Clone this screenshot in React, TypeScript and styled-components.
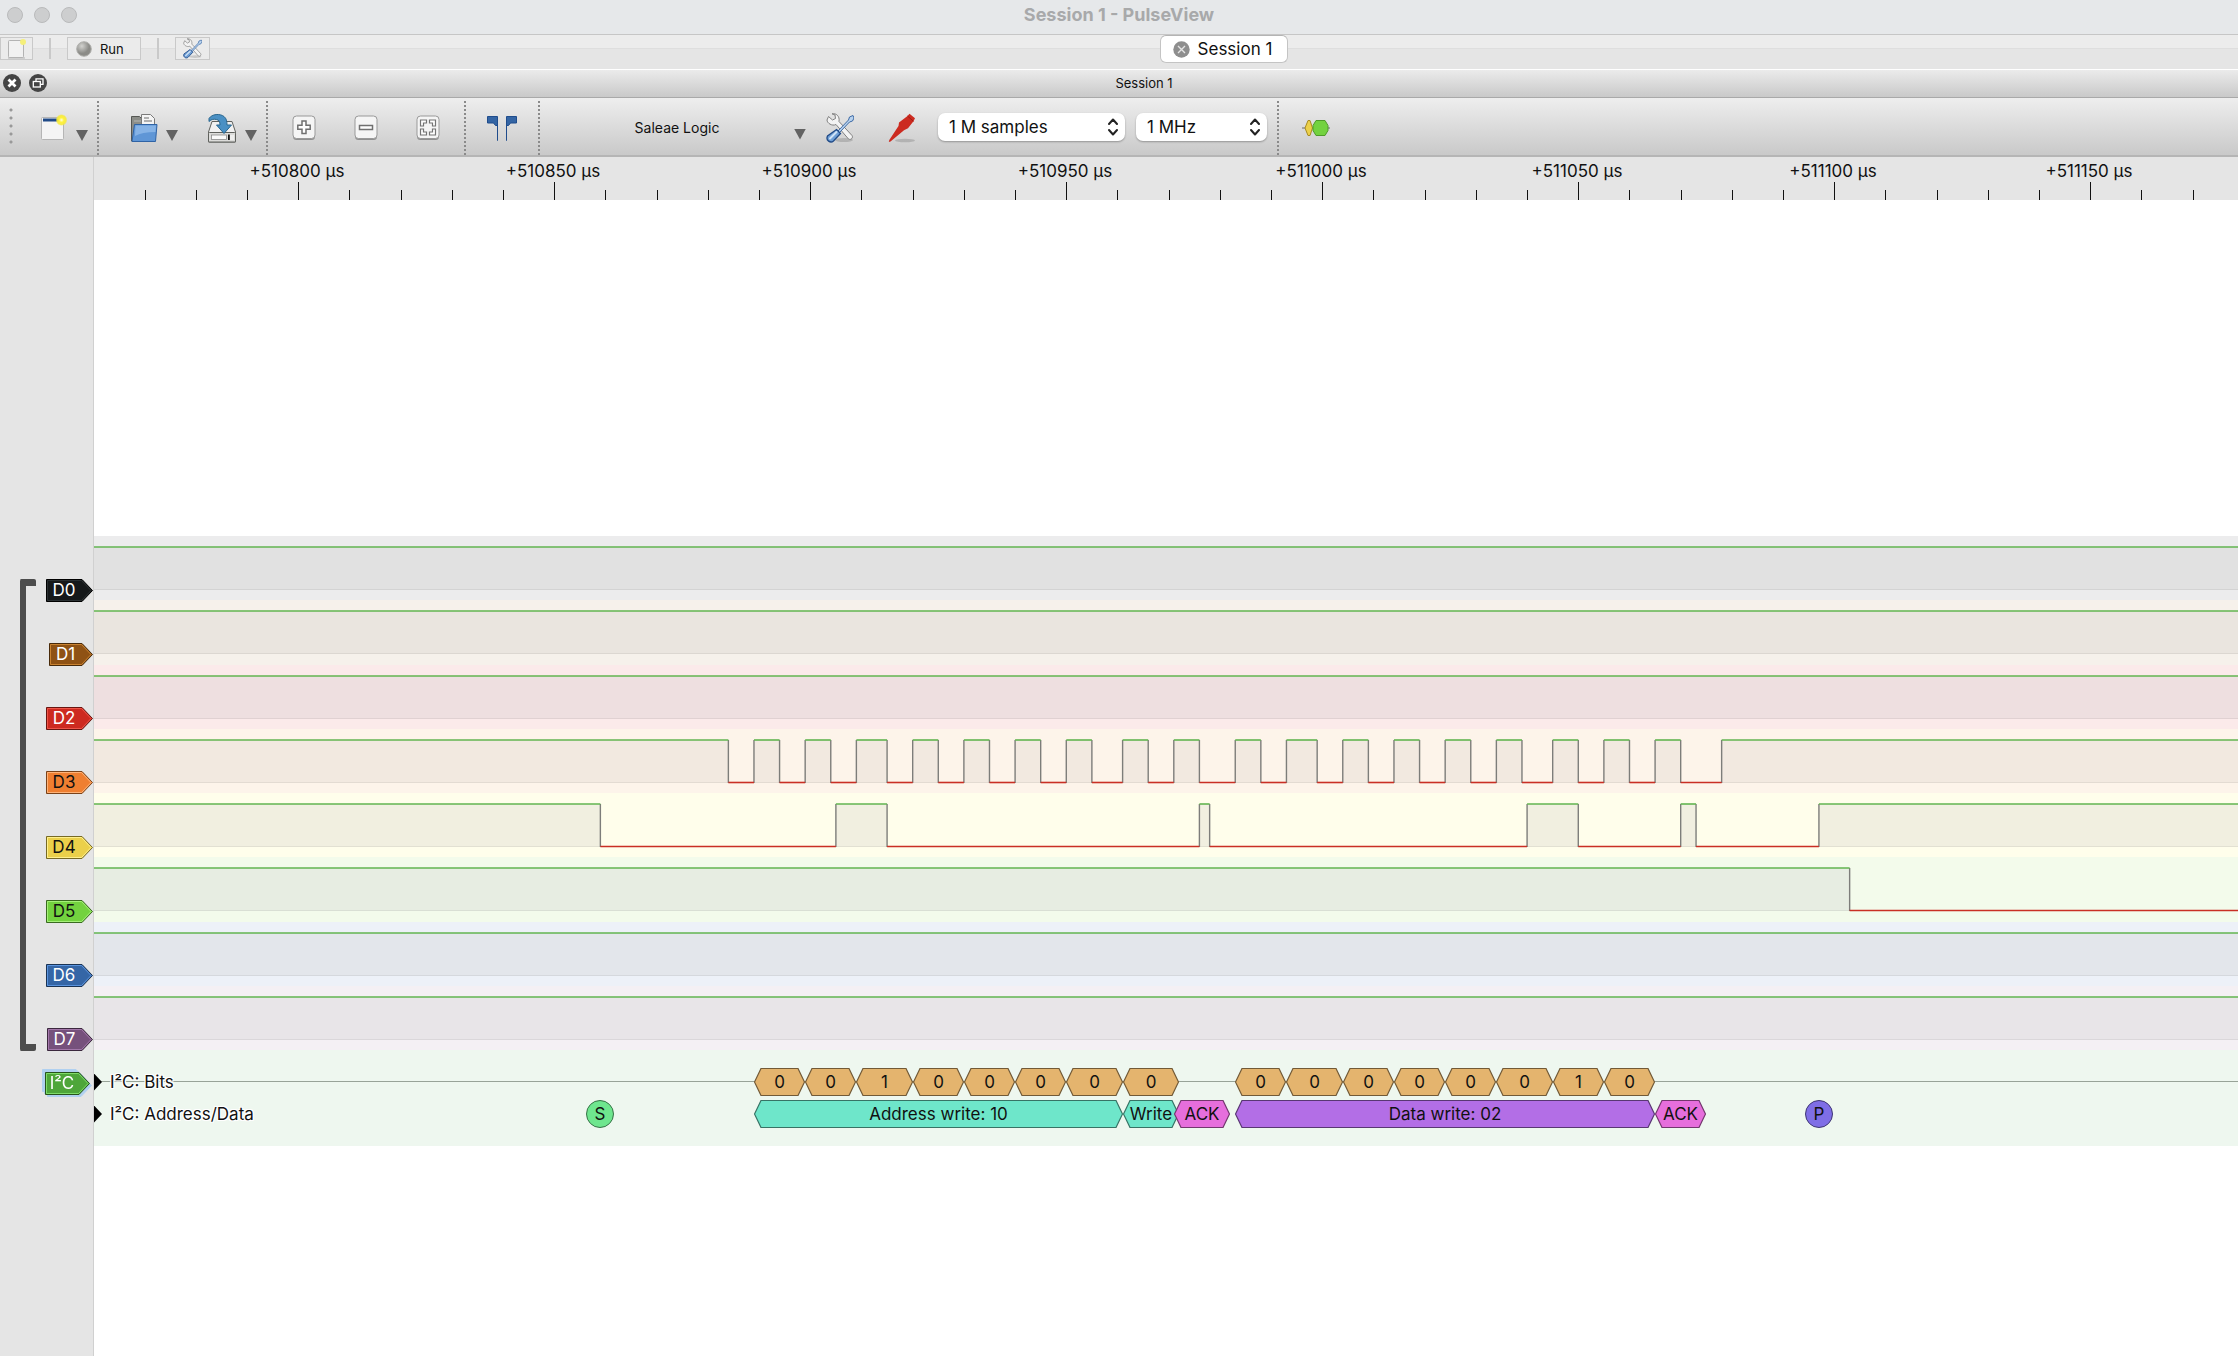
import React from "react";
import styled, { createGlobalStyle } from "styled-components";

/* ---------- time base ---------- */

const VIEW_START = 510760.1;
const PX_PER_US = 5.12;
const timeToX = (us: number) => (us - VIEW_START) * PX_PER_US;
const BASE = 510800;

/* ---------- data ---------- */

type Channel = {
  name: string;
  color: string;
  edge: string;
  glow: string;
  dark?: boolean;
  row: string;
  fill: string;
  edges: number[];
};

const CLOCK_EDGES = [
  84, 89, 94, 99, 104, 109, 115, 120, 125, 130, 135, 140, 145, 150, 155, 161, 166, 171, 176, 183, 188, 193, 199, 204,
  209, 214, 219, 224, 229, 234, 239, 245, 250, 255, 260, 265, 270, 278,
];

const CHANNELS: Channel[] = [
  { name: "D0", color: "#16191a", edge: "#000000", glow: "#2b3133", row: "#ececed", fill: "#e1e1e1", edges: [] },
  { name: "D1", color: "#8f5214", edge: "#482a0a", glow: "#c98230", row: "#f6f1eb", fill: "#eae5df", edges: [] },
  { name: "D2", color: "#cd2a20", edge: "#681510", glow: "#ee5448", row: "#fbeaea", fill: "#eedfe0", edges: [] },
  { name: "D3", color: "#ef7f31", edge: "#7a4219", glow: "#ffb277", dark: true, row: "#fdf4ea", fill: "#f2e9e0", edges: CLOCK_EDGES },
  { name: "D4", color: "#ebd04a", edge: "#776a24", glow: "#fff08c", dark: true, row: "#fffeeb", fill: "#f1efe0", edges: [59, 105, 115, 176, 178, 240, 250, 270, 273, 297] },
  { name: "D5", color: "#73d23f", edge: "#3a6a20", glow: "#a4f078", dark: true, row: "#f3fbeb", fill: "#e7ede2", edges: [303] },
  { name: "D6", color: "#3566a6", edge: "#1a3354", glow: "#5a94df", row: "#edf1f8", fill: "#e3e6eb", edges: [] },
  { name: "D7", color: "#76517c", edge: "#3b283e", glow: "#a377aa", row: "#f4f0f4", fill: "#e8e5e8", edges: [] },
];

type Annotation = { from: number; to: number; text: string; color: string; edge: string };

const bit = (from: number, to: number, text: string): Annotation => ({ from, to, text, color: "#e4b46e", edge: "#725a37" });

const BITS: Annotation[] = [
  bit(89, 99, "0"), bit(99, 109, "0"), bit(109, 120, "1"), bit(120, 130, "0"), bit(130, 140, "0"),
  bit(140, 150, "0"), bit(150, 161, "0"), bit(161, 172, "0"),
  bit(183, 193, "0"), bit(193, 204, "0"), bit(204, 214, "0"), bit(214, 224, "0"), bit(224, 234, "0"),
  bit(234, 245, "0"), bit(245, 255, "1"), bit(255, 265, "0"),
];

const FIELDS: Annotation[] = [
  { from: 89, to: 161, text: "Address write: 10", color: "#6ee6ca", edge: "#377365" },
  { from: 161, to: 172, text: "Write", color: "#6ee6ca", edge: "#377365" },
  { from: 171, to: 182, text: "ACK", color: "#e66edc", edge: "#73376e" },
  { from: 183, to: 265, text: "Data write: 02", color: "#b36ee6", edge: "#593773" },
  { from: 265, to: 275, text: "ACK", color: "#e66edc", edge: "#73376e" },
];

const MARKS = [
  { at: 59, text: "S", color: "#6ee68e", edge: "#377347" },
  { at: 297, text: "P", color: "#7f6ee6", edge: "#3f3773" },
];

const MAJOR_TIMES = [510800, 510850, 510900, 510950, 511000, 511050, 511100, 511150];

/* ---------- styles ---------- */

const GlobalStyle = createGlobalStyle`
  *, *::before, *::after { box-sizing: border-box; }
  body { margin: 0; background: #fff; font-family: Inter, "Liberation Sans", sans-serif; color: #111; }
  button, select { font: inherit; color: inherit; }
  svg { display: block; }
`;

const Window = styled.div`
  display: flex;
  flex-direction: column;
  min-height: 100vh;
  overflow: hidden;
`;

const TitleBar = styled.header`
  display: grid;
  grid-template-columns: 1fr auto 1fr;
  align-items: center;
  height: 35px;
  padding: 0 7px 4px;
  background: #e6e8ea;
  border-bottom: 1px solid #c6c6c6;
`;

const Lights = styled.div`
  display: flex;
  gap: 11px;
`;

const Light = styled.button`
  width: 16px;
  height: 16px;
  padding: 0;
  border: 1px solid #b9babb;
  border-radius: 50%;
  background: #cdcecf;
`;

const Title = styled.h1`
  margin: 0;
  font-size: 18px;
  line-height: 22px;
  font-weight: 700;
  color: #a8a9aa;
`;

const MainBar = styled.div`
  display: flex;
  align-items: flex-start;
  height: 34px;
  background: linear-gradient(#ececec 0 13px, #dedede 13px 14px, #e5e5e5 14px);
`;

const FlatButton = styled.button<{ $width: number }>`
  display: flex;
  align-items: center;
  justify-content: center;
  width: ${(p) => p.$width}px;
  height: 23px;
  margin-top: 2px;
  padding: 0;
  border: 1px solid #c9c9c9;
  background: #ebebeb;
`;

const RunButton = styled(FlatButton)`
  justify-content: flex-start;
  gap: 8px;
  padding-left: 8px;
  font-size: 13px;
  line-height: 16px;
`;

const BarDivider = styled.div`
  width: 2px;
  height: 21px;
  margin: 3px 16px 0;
  background: #c9c9c9;
`;

const TabStrip = styled.nav`
  display: flex;
  flex: 1;
  justify-content: center;
`;

const Tab = styled.button`
  display: flex;
  align-items: center;
  gap: 8px;
  height: 28px;
  padding: 0 15px 0 12px;
  border: 1px solid #c4c4c4;
  border-top-color: #b4b4b4;
  border-radius: 6px;
  background: #fff;
  font-size: 17px;
  line-height: 22px;
`;

const DockHeader = styled.div`
  display: flex;
  align-items: center;
  gap: 8px;
  height: 29px;
  padding: 0 5px 1px 3px;
  border-top: 1px solid #fff;
  border-bottom: 1px solid #a9a9a9;
  background: linear-gradient(#ebebeb, #c9c9c9);
`;

const RoundButton = styled.button`
  width: 18px;
  height: 18px;
  padding: 0;
  border: 0;
  border-radius: 50%;
  background: #454545;
`;

const DockTitle = styled.h2`
  flex: 1;
  margin: 0;
  text-align: center;
  font-size: 13px;
  line-height: 16px;
  font-weight: 400;
`;

const Toolbar = styled.div`
  display: flex;
  height: 59px;
  border-bottom: 2px solid #b5b5b5;
  background: linear-gradient(#eeeeee, #c9c9c9);
`;

const Grip = styled.div`
  width: 20px;
  margin: 10px 0;
  background: radial-gradient(circle at 11px 4px, #999 0 1px, transparent 2px) 0 -2px / 20px 8px repeat-y;
`;

const ToolGroup = styled.div<{ $start: number; $end: number; $gap?: number; $open?: boolean }>`
  display: flex;
  align-items: center;
  gap: ${(p) => p.$gap ?? 0}px;
  padding: 0 ${(p) => p.$end}px 0 ${(p) => p.$start}px;
  position: relative;
  &::after {
    content: "";
    display: ${(p) => (p.$open ? "none" : "block")};
    position: absolute;
    right: -1px;
    top: 3px;
    bottom: 0;
    width: 2px;
    background: repeating-linear-gradient(#8a8a8a 0 2px, transparent 2px 4px);
  }
`;

const ToolButton = styled.button`
  display: flex;
  align-items: center;
  gap: 8px;
  height: 50px;
  padding: 2px 0 0;
  border: 0;
  background: none;
`;

const Arrow = styled.span`
  width: 12px;
  height: 11px;
  margin-top: 16px;
  background: #636363;
  clip-path: polygon(0 0, 100% 0, 50% 100%);
`;

const DeviceButton = styled(ToolButton)`
  gap: 0;
  margin-right: 20px;
  font-size: 14px;
  line-height: 16px;
  ${Arrow} {
    margin-top: 13px;
  }
`;

const DeviceName = styled.span`
  width: 234px;
  text-align: center;
`;

const SelectBox = styled.label<{ $width: number }>`
  display: grid;
  align-items: center;
  width: ${(p) => p.$width}px;
  height: 28px;
  margin-right: 11px;
  border-radius: 7px;
  background: #fff;
  box-shadow: 0 1px 2px rgba(0, 0, 0, 0.3);
  > * {
    grid-area: 1 / 1;
  }
  svg {
    justify-self: end;
    margin-right: 7px;
    pointer-events: none;
  }
`;

const Select = styled.select`
  appearance: none;
  width: 100%;
  height: 28px;
  padding: 0 28px 0 11px;
  border: 0;
  background: none;
  font-size: 17px;
  line-height: 22px;
`;

const View = styled.main`
  display: grid;
  grid-template-columns: 94px minmax(0, 1fr);
  flex: 1;
`;

const HeaderPane = styled.aside`
  padding-top: 401px;
  border-right: 1px solid #d0d0d0;
  background: #e5e5e5;
`;

const ChannelGroup = styled.div`
  display: grid;
  grid-template-columns: 16px 1fr;
  height: 514px;
  padding-left: 20px;
`;

const Bracket = styled.div`
  height: 472px;
  margin-top: 21px;
  border: solid #4d4d4d;
  border-width: 7px 0 7px 6px;
  border-radius: 2px;
`;

const TagColumn = styled.div`
  display: grid;
  grid-template-rows: repeat(8, 1fr);
  align-items: center;
  justify-items: end;
`;

const TagBox = styled.button<{ $dark?: boolean; $selected?: boolean }>`
  display: grid;
  align-items: center;
  height: 23px;
  padding: 0;
  border: 0;
  background: none;
  color: ${(p) => (p.$dark ? "#111" : "#fff")};
  font-size: 17px;
  line-height: 23px;
  filter: ${(p) =>
    p.$selected
      ? "drop-shadow(2px 2px 0 #b0d0f0) drop-shadow(-3px -3px 0 #b0d0f0)"
      : "none"};
  > * {
    grid-area: 1 / 1;
  }
  span {
    padding: 0 11px 0 0;
    text-align: center;
  }
`;

const DecoderTag = styled.div`
  display: flex;
  justify-content: flex-end;
  padding-right: 3px;
`;

const TracePane = styled.div`
  min-width: 0;
  overflow: hidden;
`;

const Ruler = styled.div`
  position: relative;
  height: 43px;
  background: #e5e5e5;
`;

const RulerLabels = styled.div`
  display: flex;
  padding: 4px 0 0 75px;
`;

const RulerLabel = styled.span`
  flex: 0 0 256px;
  text-align: center;
  font-size: 17px;
  line-height: 20px;
`;

const RulerTicks = styled.svg`
  position: absolute;
  inset: 0;
`;

const Rows = styled.div`
  display: grid;
  grid-template-rows: repeat(8, 1fr);
  height: 514px;
  margin-top: 336px;
`;

const ChannelRow = styled.div<{ $color: string }>`
  min-height: 0;
  background: ${(p) => p.$color};
`;

const Decoder = styled.section`
  height: 96px;
  padding: 16px 0;
  background: #eef7ef;
`;

const DecodeRow = styled.div<{ $line?: boolean }>`
  position: relative;
  display: flex;
  align-items: center;
  gap: 8px;
  height: 32px;
  background: ${(p) => (p.$line ? "linear-gradient(#98a398, #98a398) 0 15px / 100% 1px no-repeat" : "none")};
`;

const Expander = styled.span`
  width: 8px;
  height: 17px;
  background: #000;
  clip-path: polygon(0 0, 100% 50%, 0 100%);
`;

const RowLabel = styled.span`
  font-size: 17px;
  line-height: 20px;
  text-shadow: -1px -1px #fff, 1px -1px #fff, -1px 1px #fff, 1px 1px #fff, 0 0 2px #fff;
`;

const Block = styled.div`
  position: absolute;
  top: 2px;
  display: grid;
  height: 28px;
  place-items: center;
  font-size: 17px;
  line-height: 20px;
  white-space: nowrap;
  > * {
    grid-area: 1 / 1;
  }
  span {
    position: relative;
  }
`;

const Mark = styled(Block)<{ $color: string; $edge: string }>`
  width: 28px;
  border: 1px solid ${(p) => p.$edge};
  border-radius: 50%;
  background: ${(p) => p.$color};
`;

/* ---------- icons ---------- */

const NewIcon = () => (
  <svg width="28" height="28" viewBox="0 0 28 28">
    <defs>
      <radialGradient id="spark">
        <stop offset="0" stopColor="#fffde0" />
        <stop offset="0.4" stopColor="#fff23a" />
        <stop offset="0.75" stopColor="#f6ea3c" stopOpacity="0.9" />
        <stop offset="1" stopColor="#f6ea3c" stopOpacity="0" />
      </radialGradient>
    </defs>
    <rect x="1.5" y="3.500" width="22" height="22" rx="1" fill="#f4f4f4" stroke="#b5b5b5" />
    <rect x="3" y="4.500" width="19" height="3" fill="#204a87" />
    <circle cx="21.500" cy="6" r="6" fill="url(#spark)" />
  </svg>
);

const PageIcon = () => (
  <svg width="22" height="22" viewBox="0 0 22 22">
    <rect x="2.500" y="2.500" width="15" height="17" rx="1" fill="#f1f1f1" stroke="#b3b3b3" />
    <path d="M2 20h17" stroke="#b3b3b3" />
    <circle cx="17" cy="4" r="3" fill="#f5ef7a" />
  </svg>
);

const OpenIcon = () => (
  <svg width="28" height="30" viewBox="0 0 28 30">
    <path d="M1.500 28V3.500h8l2 2h12V28z" fill="#8b8d88" stroke="#555753" />
    <path d="M4 8h18" stroke="#b5b7b2" />
    <path d="M11.500 18V1.500h9l4 4V18z" fill="#f4f4f4" stroke="#7a7a7a" />
    <path d="M14 5h5M14 8h8" stroke="#999" strokeWidth="1.500" />
    <path d="M4.500 11.500H27L25.500 28.500H2z" fill="#5f96d6" stroke="#2f63a5" />
    <path d="M5.500 12.500H26L25.500 19Q12 19 5 23z" fill="#86b3e6" />
  </svg>
);

const SaveIcon = () => (
  <svg width="30" height="30" viewBox="0 0 30 30">
    <path d="M5 8.500h20L28.500 19v10H1.500V19z" fill="#f1f1f1" stroke="#5f615d" />
    <rect x="1.500" y="19.500" width="27" height="9.500" rx="1" fill="#dcdcda" stroke="#5f615d" />
    <rect x="4.500" y="22" width="15" height="4.500" fill="#fafafa" stroke="#8a8a8a" strokeWidth="0.800" />
    <rect x="21" y="21.500" width="1.800" height="5.500" fill="#111" />
    <path d="M24 22v5M26 22v5" stroke="#fff" />
    <path d="M2 5.500C5 .8 13 .3 17 3.500c2.500 2 3 5 3 8.500h4.500L17 20.500 9.500 12H13c0-3-.8-5-3.500-5.500C7 6 4.500 6 2 8.500z" fill="#4a90c4" stroke="#28668f" />
  </svg>
);

const ZoomFrame = ({ children }: { children: React.ReactNode }) => (
  <svg width="24" height="26" viewBox="0 0 24 26">
    <rect x="1" y="2.500" width="22" height="22.500" rx="3.500" fill="#8f8f8f" />
    <rect x="1" y="1" width="22" height="22.500" rx="3.500" fill="#f5f5f5" stroke="#999" />
    {children}
  </svg>
);

const PlusIcon = () => (
  <ZoomFrame>
    <path d="M10 6h4v4.200h4.200v4H14v4.300h-4v-4.300H5.800v-4H10z" fill="#fff" stroke="#707070" strokeWidth="1.500" />
  </ZoomFrame>
);

const MinusIcon = () => (
  <ZoomFrame>
    <rect x="5.500" y="10.500" width="13" height="4" fill="#fff" stroke="#707070" strokeWidth="1.500" />
  </ZoomFrame>
);

const FitIcon = () => (
  <ZoomFrame>
    <g fill="#fff" stroke="#747474" strokeWidth="1.200">
      <path d="M4.500 5h6v3H7.500V11h-3z" />
      <path d="M19.500 5h-6v3h3V11h3z" />
      <path d="M4.500 20h6v-3H7.500V14h-3z" />
      <path d="M19.500 20h-6v-3h3V14h3z" />
    </g>
  </ZoomFrame>
);

const CursorsIcon = () => (
  <svg width="30" height="26" viewBox="0 0 30 26">
    <g fill="#3465a4" stroke="#1f4c8c">
      <path d="M.5 1.500h10v24V10.500H8.500L6.500 8H.5z" />
      <path d="M29.500 1.500h-10v24V10.500h2L23.500 8h6z" />
    </g>
  </svg>
);

const ToolsIcon = ({ size = 30 }: { size?: number }) => (
  <svg width={size - 2} height={size} viewBox="0 0 28 30">
    <ellipse cx="18" cy="27" rx="9" ry="2" fill="#000" opacity="0.15" />
    <path
      d="M2.500 3.500 6.500 7 9.500 5.500 9 2 6 .8C10 0 14 3 13 8.500L26 22.500c1.500 2-1 5-3.500 3.500L10 11.500C6 13.500 1 10 1 7z"
      fill="#f3f3f3"
      stroke="#808080"
    />
    <path d="M12 18 22.500 7l1-3L27 2.500 28 5l-1.500 3-3 1L13.500 19.500z" fill="#b8d2ee" stroke="#3d6aa5" />
    <path d="M10.500 16.500l4 4L7.500 28c-3 2.500-8-.5-6-5z" fill="#6f9fd6" stroke="#204a87" strokeWidth="1.300" />
    <path d="M10.500 19 4 25.500" stroke="#cfe2f6" strokeWidth="2" strokeLinecap="round" />
  </svg>
);

const ProbeIcon = () => (
  <svg width="28" height="30" viewBox="0 0 28 30">
    <ellipse cx="17" cy="27.500" rx="10" ry="1.800" fill="#000" opacity="0.15" />
    <path d="M19.500 3 21.500.8l5.500 4.500-1.500 3-5.500 7-4 2L2.500 28.500.8 29l.5-2L10.500 13 11 9.500z" fill="#cc2b20" />
    <path d="M19.500 3 25.500 8.300" stroke="#9f1b13" />
  </svg>
);

const DecoderIcon = () => (
  <svg width="28" height="20" viewBox="0 0 28 20">
    <path d="M0 10h28" stroke="#6b6b6b" />
    <path d="M6 2.500h2l2.500 7.500L8 17.500H6L3 10z" fill="#ecd04a" stroke="#a88b1f" />
    <path d="M14 2.500h9l3 5v5l-3 5h-9l-3-5v-5z" fill="#73d23f" stroke="#4e9a2a" />
  </svg>
);

const Chevrons = () => (
  <svg width="10" height="18" viewBox="0 0 10 18" fill="none" stroke="#222" strokeWidth="2" strokeLinecap="round" strokeLinejoin="round">
    <path d="M1 6l4-4.500L9 6M1 12l4 4.500L9 12" />
  </svg>
);

const RunIcon = () => (
  <svg width="16" height="16" viewBox="0 0 16 16">
    <defs>
      <radialGradient id="lamp" cx="0.350" cy="0.300">
        <stop offset="0" stopColor="#d2d2cf" />
        <stop offset="1" stopColor="#8b8b87" />
      </radialGradient>
    </defs>
    <circle cx="8" cy="8" r="7.300" fill="url(#lamp)" stroke="#b0b0ad" />
  </svg>
);

const TabCloseIcon = () => (
  <svg width="17" height="17" viewBox="0 0 17 17">
    <circle cx="8.500" cy="8.500" r="8.200" fill="#8e8e8e" />
    <path d="M5 5l7 7M12 5l-7 7" stroke="#e4e4e4" strokeWidth="1.400" />
  </svg>
);

/* ---------- parts ---------- */

const Tag = ({ name, width, color, edge, glow, dark, selected }: {
  name: string; width: number; color: string; edge: string; glow: string; dark?: boolean; selected?: boolean;
}) => (
  <TagBox $dark={dark} $selected={selected}>
    <svg width={width} height="23">
      <path d={`M.5.5H${width - 11}L${width - 0.5} 11.500 ${width - 11} 22.500H.5z`} fill={color} stroke={edge} />
      <path d={`M1.500 1.500H${width - 11.5}L${width - 2} 11.500 ${width - 11.5} 21.500H1.500z`} fill="none" stroke={glow} />
    </svg>
    <span>{name}</span>
  </TagBox>
);

const HIGH = 11;
const LOW = 54;
const END = 8000;

const Waveform = ({ channel }: { channel: Channel }) => {
  const stops = [0, ...channel.edges.map((t) => timeToX(BASE + t)), END];
  const runs = stops.slice(1).map((to, i) => ({ from: stops[i], to, high: i % 2 === 0 }));
  return (
    <svg width="100%" height="64" role="img" aria-label={`${channel.name} trace`}>
      {runs.filter((r) => r.high).map((r) => (
        <rect key={r.from} x={r.from} y={HIGH} width={r.to - r.from} height={LOW - HIGH} fill={channel.fill} />
      ))}
      <path d={`M0 ${LOW - 0.5}H${END}`} stroke="#000" strokeOpacity="0.060" />
      {runs.slice(1).map((r) => (
        <path key={r.from} d={`M${r.from} ${HIGH}V${LOW}`} stroke="#7d7d7a" strokeWidth="1.400" />
      ))}
      {runs.map((r) => (
        <path
          key={r.from}
          d={`M${r.from} ${r.high ? HIGH : LOW - 0.500}H${r.to}`}
          stroke={r.high ? "#62b450" : "#c92f24"}
          strokeWidth="1.600"
        />
      ))}
    </svg>
  );
};

const AnnotationBlock = ({ item }: { item: Annotation }) => {
  const left = Math.round(timeToX(BASE + item.from));
  const width = Math.round(timeToX(BASE + item.to)) - left;
  return (
    <Block style={{ left, width }}>
      <svg width={width} height="28">
        <path
          d={`M.5 14 7 .5H${width - 7}L${width - 0.5} 14 ${width - 7} 27.500H7z`}
          fill={item.color}
          stroke={item.edge}
          strokeWidth="1.200"
        />
      </svg>
      <span>{item.text}</span>
    </Block>
  );
};

const TimeRuler = () => {
  const ticks = Array.from({ length: 120 }, (_, i) => 510770 + i * 10);
  return (
    <Ruler>
      <RulerTicks width="100%" height="43">
        {ticks.map((t) => {
          const x = Math.round(timeToX(t)) + 0.5;
          return <path key={t} d={`M${x} ${t % 50 === 0 ? 25 : 33}V43`} stroke="#111" />;
        })}
      </RulerTicks>
      <RulerLabels>
        {MAJOR_TIMES.map((t) => (
          <RulerLabel key={t}>+{t} µs</RulerLabel>
        ))}
      </RulerLabels>
    </Ruler>
  );
};

export default function App() {
  return (
    <Window>
      <GlobalStyle />
      <TitleBar>
        <Lights>
          <Light aria-label="Close" />
          <Light aria-label="Minimize" />
          <Light aria-label="Zoom" />
        </Lights>
        <Title>Session 1 - PulseView</Title>
      </TitleBar>

      <MainBar>
        <FlatButton $width={33} aria-label="New session"><PageIcon /></FlatButton>
        <BarDivider />
        <RunButton $width={74}><RunIcon />Run</RunButton>
        <BarDivider />
        <FlatButton $width={35} aria-label="Settings"><ToolsIcon size={21} /></FlatButton>
        <TabStrip>
          <Tab><TabCloseIcon />Session 1</Tab>
        </TabStrip>
      </MainBar>

      <DockHeader>
        <RoundButton aria-label="Close session">
          <svg width="18" height="18" viewBox="0 0 18 18">
            <path d="M5.500 5.500l7 7M12.500 5.500l-7 7" stroke="#fff" strokeWidth="2.800" />
          </svg>
        </RoundButton>
        <RoundButton aria-label="Float session">
          <svg width="18" height="18" viewBox="0 0 18 18" fill="none" stroke="#fff" strokeWidth="1.300">
            <path d="M7 7V4.800h7v5.500h-2.500" />
            <rect x="4.300" y="7.500" width="7" height="5.500" />
          </svg>
        </RoundButton>
        <DockTitle>Session 1</DockTitle>
      </DockHeader>

      <Toolbar>
        <Grip />
        <ToolGroup $start={20} $end={10}>
          <ToolButton aria-label="New view"><NewIcon /><Arrow /></ToolButton>
        </ToolGroup>
        <ToolGroup $start={32} $end={10} $gap={29}>
          <ToolButton aria-label="Open"><OpenIcon /><Arrow /></ToolButton>
          <ToolButton aria-label="Save"><SaveIcon /><Arrow /></ToolButton>
        </ToolGroup>
        <ToolGroup $start={25} $end={25} $gap={38}>
          <ToolButton aria-label="Zoom in"><PlusIcon /></ToolButton>
          <ToolButton aria-label="Zoom out"><MinusIcon /></ToolButton>
          <ToolButton aria-label="Zoom to fit"><FitIcon /></ToolButton>
        </ToolGroup>
        <ToolGroup $start={22} $end={22}>
          <ToolButton aria-label="Show cursors"><CursorsIcon /></ToolButton>
        </ToolGroup>
        <ToolGroup $start={21} $end={0}>
          <DeviceButton><DeviceName>Saleae Logic</DeviceName><Arrow /></DeviceButton>
          <ToolGroup $start={0} $end={22} $gap={34} $open>
            <ToolButton aria-label="Configure device"><ToolsIcon /></ToolButton>
            <ToolButton aria-label="Channels"><ProbeIcon /></ToolButton>
          </ToolGroup>
          <SelectBox $width={187}>
            <Select aria-label="Sample count"><option>1 M samples</option></Select>
            <Chevrons />
          </SelectBox>
          <SelectBox $width={131}>
            <Select aria-label="Sample rate"><option>1 MHz</option></Select>
            <Chevrons />
          </SelectBox>
        </ToolGroup>
        <ToolGroup $start={24} $end={0} $open>
          <ToolButton aria-label="Add protocol decoder"><DecoderIcon /></ToolButton>
        </ToolGroup>
      </Toolbar>

      <View>
        <HeaderPane>
          <ChannelGroup>
            <Bracket />
            <TagColumn>
              {CHANNELS.map((c) => (
                <Tag key={c.name} {...c} width={c.name === "D1" ? 44 : c.name === "D7" ? 46 : 47} />
              ))}
            </TagColumn>
          </ChannelGroup>
          <DecoderTag>
            <Tag name="I²C" width={45} color="#4ea63a" edge="#27531d" glow="#7fdc68" selected />
          </DecoderTag>
        </HeaderPane>

        <TracePane>
          <TimeRuler />
          <Rows>
            {CHANNELS.map((c) => (
              <ChannelRow key={c.name} $color={c.row}>
                <Waveform channel={c} />
              </ChannelRow>
            ))}
          </Rows>
          <Decoder>
            <DecodeRow $line>
              <Expander />
              <RowLabel>I²C: Bits</RowLabel>
              {BITS.map((b) => <AnnotationBlock key={b.from} item={b} />)}
            </DecodeRow>
            <DecodeRow>
              <Expander />
              <RowLabel>I²C: Address/Data</RowLabel>
              {FIELDS.map((f) => <AnnotationBlock key={f.from} item={f} />)}
              {MARKS.map((m) => (
                <Mark key={m.text} $color={m.color} $edge={m.edge} style={{ left: Math.round(timeToX(BASE + m.at)) - 14 }}>
                  <span>{m.text}</span>
                </Mark>
              ))}
            </DecodeRow>
          </Decoder>
        </TracePane>
      </View>
    </Window>
  );
}
